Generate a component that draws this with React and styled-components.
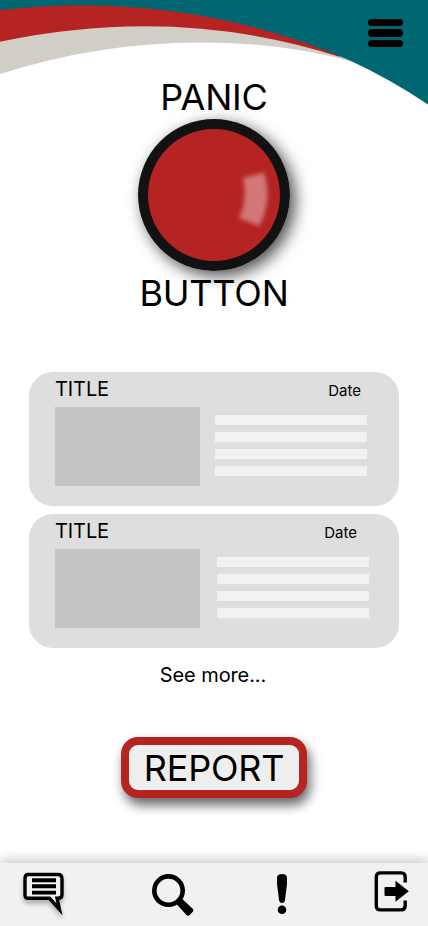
import React from 'react';
import styled, { createGlobalStyle } from 'styled-components';

const GlobalStyle = createGlobalStyle`
  *, *::before, *::after { box-sizing: border-box; }
  body { margin: 0; background: #fff; }
`;

const Page = styled.div`
  position: relative;
  display: flex;
  flex-direction: column;
  width: 428px;
  height: 926px;
  margin: 0 auto;
  overflow: hidden;
  background: #fff;
  color: #000;
  font-family: Inter, 'Liberation Sans', sans-serif;
  font-weight: 400;
`;

const PlainButton = styled.button`
  padding: 0;
  border: 0;
  background: none;
  color: inherit;
  font: inherit;
  cursor: pointer;
`;

const Waves = styled.svg`
  position: absolute;
  top: 0;
  left: 0;
  width: 428px;
  height: 106px;
`;

const TopBar = styled.header`
  position: relative;
  display: flex;
  justify-content: flex-end;
  height: 75px;
  padding: 19px 25px 0 0;
`;

const MenuButton = styled(PlainButton)`
  display: flex;
  flex-direction: column;
  gap: 3px;
  width: 35px;
  height: 28px;
`;

const MenuLine = styled.span`
  width: 35px;
  height: 7.3px;
  border-radius: 4px;
  background: #000;
`;

const Hero = styled.section`
  position: relative;
  display: flex;
  flex-direction: column;
  align-items: center;
  height: 297px;
`;

const HeroWord = styled.span`
  z-index: 1;
  font-size: 36px;
  letter-spacing: -0.2px;
  line-height: 44px;
`;

const PanicButton = styled(PlainButton)`
  display: block;
  width: 152px;
  height: 152px;
  flex: none;
  border-radius: 50%;
  box-shadow: 5px 5px 16px rgba(0, 0, 0, 0.7);

  svg { display: block; }
`;

const CardList = styled.section`
  display: flex;
  flex-direction: column;
  gap: 8px;
  padding: 0 29px;
`;

const Card = styled.article`
  display: flex;
  flex-direction: column;
  height: 134px;
  padding: 4px 0 0 26px;
  border-radius: 24px;
  background: #dedede;
`;

const CardHeader = styled.div`
  display: flex;
  justify-content: space-between;
  height: 31px;
  padding-right: ${({ $inset }) => $inset}px;
`;

const CardTitle = styled.span`
  font-size: 20px;
  letter-spacing: -0.1px;
  line-height: 26px;
`;

const CardDate = styled.span`
  padding-top: 5px;
  font-size: 15px;
  line-height: 20px;
`;

const CardBody = styled.div`
  display: flex;
  gap: ${({ $gap }) => $gap}px;
`;

const Thumbnail = styled.div`
  width: 145px;
  height: 79px;
  background: #c4c4c4;
`;

const Lines = styled.div`
  display: flex;
  flex-direction: column;
  gap: 7px;
  padding-top: 8px;
`;

const Line = styled.div`
  width: 152px;
  height: 10px;
  background: #f2f2f2;
`;

const SeeMore = styled(PlainButton)`
  align-self: center;
  margin: 14px 2px 0 0;
  font-size: 20px;
  letter-spacing: -0.1px;
  line-height: 26px;
`;

const ReportButton = styled(PlainButton)`
  align-self: center;
  width: 186px;
  height: 61px;
  margin-top: 49px;
  padding-top: 1px;
  border: 8px solid #b52423;
  border-radius: 17px;
  background: #eee;
  box-shadow: 3px 7px 12px rgba(0, 0, 0, 0.6);
  font-size: 36px;
  letter-spacing: -0.2px;
  line-height: 44px;
`;

const NavBar = styled.nav`
  display: grid;
  grid-template-columns: 128px 129px 95px 36px;
  justify-items: start;
  align-items: start;
  height: 63px;
  margin-top: auto;
  padding: 8px 0 0 22px;
  background: #f1f1f1;
  box-shadow: 0 -4px 10px rgba(0, 0, 0, 0.2);
`;

const NavButton = styled(PlainButton)`
  height: 46px;

  svg { display: block; overflow: visible; }
`;

const ShadowIcon = styled.svg`
  filter: drop-shadow(0 4px 2px rgba(0, 0, 0, 0.25));
`;

const cards = [
  { id: 1, title: 'TITLE', date: 'Date', inset: 38, gap: 15 },
  { id: 2, title: 'TITLE', date: 'Date', inset: 42, gap: 17 },
];

function HeaderWaves() {
  return (
    <Waves viewBox="0 0 428 106" aria-hidden="true">
      <path d="M0 0H300L356 63Q288 42.5 200 42.5Q99 42.5 0 74Z" fill="#d1cdc7" />
      <path d="M0 0H300L340 57Q245 26.3 145 26.3Q73 26.3 0 41.8Z" fill="#b52423" />
      <path d="M0 0H428V104.5Q390 79 350 60.5Q222 5.3 82 5.3Q40 5.3 0 10Z" fill="#006772" />
    </Waves>
  );
}

function PanicFace() {
  return (
    <svg width="152" height="152" viewBox="0 0 152 152" aria-hidden="true">
      <defs>
        <filter id="glow" x="-50%" y="-50%" width="200%" height="200%">
          <feGaussianBlur stdDeviation="2" />
        </filter>
      </defs>
      <circle cx="76" cy="76" r="76" fill="#121212" />
      <circle cx="76" cy="76" r="66" fill="#b52423" />
      <path
        d="M105 59L126 53.5Q135 81 121 107L101 99Q110 80 105 59Z"
        fill="#fff"
        opacity="0.38"
        filter="url(#glow)"
      />
    </svg>
  );
}

function MessageIcon() {
  return (
    <ShadowIcon width="44" height="46" viewBox="0 0 44 46">
      <path
        d="M6 3.5H36Q40 3.5 40 7.5V23.5Q40 27.3 36 27.3H35L37.5 38.5L27.5 27.3H6Q3 27.3 3 24V7.5Q3 3.5 6 3.5Z"
        fill="#f1f1f1"
        stroke="#000"
        strokeWidth="3.4"
      />
      <path d="M10 9.3H34M10 15.2H34M10 21.6H34" stroke="#000" strokeWidth="3.9" />
    </ShadowIcon>
  );
}

function SearchIcon() {
  return (
    <svg width="44" height="46" viewBox="0 0 44 46">
      <circle cx="18.5" cy="19.6" r="14.2" fill="none" stroke="#000" strokeWidth="4.6" />
      <path d="M26 32.5L31.2 27L43 38Q44 39.5 42.8 40.7L39.5 44.2Q38 45.2 36.5 44Z" />
    </svg>
  );
}

function AlertIcon() {
  return (
    <svg width="6" height="46" viewBox="3 0 6 46">
      <path d="M1 7Q1 3 6 3Q11 3 11 7V13L9 29Q8.5 32 6 32Q3.5 32 3 29L1 13Z" />
      <circle cx="6" cy="38.8" r="4.3" />
    </svg>
  );
}

function ExitIcon() {
  return (
    <svg width="36" height="46" viewBox="0 0 36 46">
      <path
        d="M31.2 11.5V6Q31.2 1.9 27.2 1.9H6.5Q2.3 1.9 2.3 6V34.7Q2.3 38.9 6.5 38.9H27.2Q31.2 38.9 31.2 34.8V29.5"
        fill="none"
        stroke="#000"
        strokeWidth="3.4"
      />
      <path d="M11.5 16H21.5V9.7L34.8 20.3L21.5 30.7V25H11.5Q10.5 25 10.5 24V17Q10.5 16 11.5 16Z" />
    </svg>
  );
}

export default function App() {
  return (
    <>
      <GlobalStyle />
      <Page>
        <HeaderWaves />
        <TopBar>
          <MenuButton aria-label="Menu">
            <MenuLine />
            <MenuLine />
            <MenuLine />
          </MenuButton>
        </TopBar>
        <Hero>
          <HeroWord>PANIC</HeroWord>
          <PanicButton aria-label="Panic button">
            <PanicFace />
          </PanicButton>
          <HeroWord>BUTTON</HeroWord>
        </Hero>
        <CardList>
          {cards.map((card) => (
            <Card key={card.id}>
              <CardHeader $inset={card.inset}>
                <CardTitle>{card.title}</CardTitle>
                <CardDate>{card.date}</CardDate>
              </CardHeader>
              <CardBody $gap={card.gap}>
                <Thumbnail />
                <Lines>
                  <Line />
                  <Line />
                  <Line />
                  <Line />
                </Lines>
              </CardBody>
            </Card>
          ))}
        </CardList>
        <SeeMore>See more...</SeeMore>
        <ReportButton>REPORT</ReportButton>
        <NavBar>
          <NavButton aria-label="Messages"><MessageIcon /></NavButton>
          <NavButton aria-label="Search"><SearchIcon /></NavButton>
          <NavButton aria-label="Alerts"><AlertIcon /></NavButton>
          <NavButton aria-label="Exit"><ExitIcon /></NavButton>
        </NavBar>
      </Page>
    </>
  );
}
